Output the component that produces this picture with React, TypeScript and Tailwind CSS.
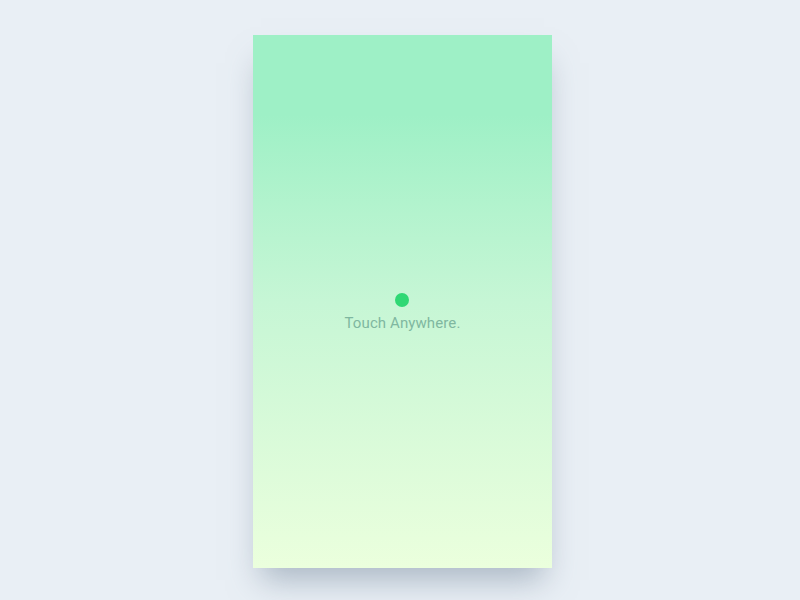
export default function App() {
  return (
    <div className="w-[800px] h-[600px] bg-[#e9eff5] flex justify-center pt-[35px]">
      <div className="ml-[5px] w-[299px] h-[533px] bg-gradient-to-b from-[#9ef0c6] from-[15%] via-[#c6f6d5] via-[50%] to-[#ebffdd] shadow-[0_20px_30px_-8px_rgba(110,130,150,0.5)] flex flex-col items-center pt-[258px]">
        <div className="-ml-[2px] w-[14px] h-[14px] rounded-full bg-[#2fd874]" />
        <p className="mt-[5px] text-[15px] tracking-[0.1px] text-[#7fb7a0] font-['Roboto',sans-serif]">Touch Anywhere.</p>
      </div>
    </div>
  )
}
